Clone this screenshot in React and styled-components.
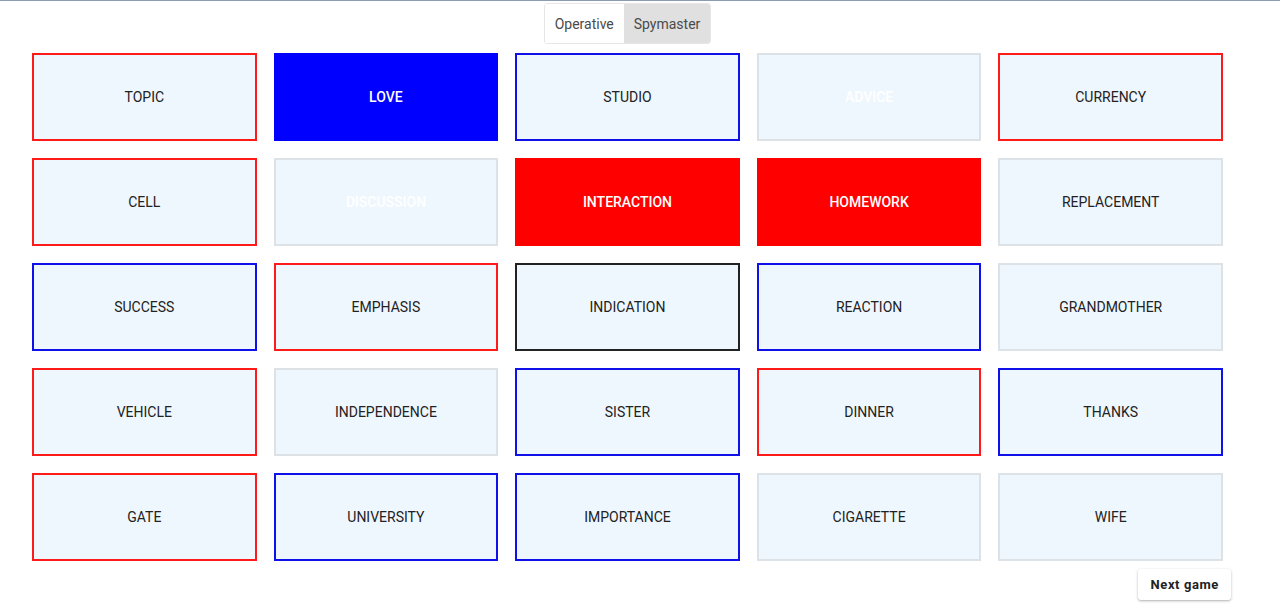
import React, { useState } from 'react';
import styled, { createGlobalStyle } from 'styled-components';

const GlobalStyle = createGlobalStyle`
  body {
    margin: 0;
    background: #fff;
    font-family: Roboto, "Liberation Sans", sans-serif;
  }
`;

const words = [
  ['TOPIC', 'red', false], ['LOVE', 'blue', true], ['STUDIO', 'blue', false], ['ADVICE', 'neutral', true], ['CURRENCY', 'red', false],
  ['CELL', 'red', false], ['DISCUSSION', 'neutral', true], ['INTERACTION', 'red', true], ['HOMEWORK', 'red', true], ['REPLACEMENT', 'neutral', false],
  ['SUCCESS', 'blue', false], ['EMPHASIS', 'red', false], ['INDICATION', 'assassin', false], ['REACTION', 'blue', false], ['GRANDMOTHER', 'neutral', false],
  ['VEHICLE', 'red', false], ['INDEPENDENCE', 'neutral', false], ['SISTER', 'blue', false], ['DINNER', 'red', false], ['THANKS', 'blue', false],
  ['GATE', 'red', false], ['UNIVERSITY', 'blue', false], ['IMPORTANCE', 'blue', false], ['CIGARETTE', 'neutral', false], ['WIFE', 'neutral', false],
];

const borders = {
  red: '#ff1a1a',
  blue: '#1010e8',
  assassin: '#222',
  neutral: '#dde2e7',
};

const fills = {
  red: '#ff0000',
  blue: '#0000ff',
  neutral: '#eff7fe',
  assassin: '#222',
};

export default function App() {
  const [mode, setMode] = useState('spymaster');
  return (
    <>
      <GlobalStyle />
      <Page>
        <Toolbar>
          <Toggle>
            <ToggleButton $active={mode === 'operative'} onClick={() => setMode('operative')}>Operative</ToggleButton>
            <ToggleButton $active={mode === 'spymaster'} onClick={() => setMode('spymaster')}>Spymaster</ToggleButton>
          </Toggle>
        </Toolbar>
        <Board>
          {words.map(([w, team, revealed]) => (
            <Card key={w} $team={team} $revealed={revealed}>{w}</Card>
          ))}
        </Board>
        <Footer>
          <NextButton>Next game</NextButton>
        </Footer>
      </Page>
    </>
  );
}

const Page = styled.div`
  border-top: 1px solid #8c9cb0;
  min-height: 605px;
`;

const Toolbar = styled.div`
  display: flex;
  justify-content: center;
  width: 1191px;
  margin-left: 32px;
  padding-top: 2px;
`;

const Toggle = styled.div`
  display: flex;
  height: 41px;
  border: 1px solid #e6e6e6;
  border-radius: 3px;
  overflow: hidden;
  box-sizing: border-box;
`;

const ToggleButton = styled.button`
  border: none;
  padding: 0 ${p => (p.$active ? 10 : 10)}px;
  font-family: Roboto, "Liberation Sans", sans-serif;
  font-size: 14px;
  color: #4a4a4a;
  background: ${p => (p.$active ? '#e0e0e0' : '#fff')};
  cursor: pointer;
`;

const Board = styled.div`
  display: grid;
  grid-template-columns: repeat(5, 1fr);
  grid-auto-rows: 88px;
  column-gap: 17px;
  row-gap: 17px;
  width: 1191px;
  margin: 9px 0 0 32px;
`;

const Card = styled.div`
  display: flex;
  align-items: center;
  justify-content: center;
  box-sizing: border-box;
  font-size: 14px;
  border: 2px solid ${p => (p.$revealed && p.$team !== 'neutral' ? fills[p.$team] : borders[p.$team])};
  background: ${p => (p.$revealed ? fills[p.$team] : '#eff7fe')};
  color: ${p => (p.$revealed ? '#fff' : '#222')};
  font-weight: ${p => (p.$revealed ? 500 : 400)};
`;

const Footer = styled.div`
  display: flex;
  justify-content: flex-end;
  padding: 8px 49px 0 0;
`;

const NextButton = styled.button`
  height: 31px;
  padding: 0 12px;
  border: none;
  border-radius: 3px;
  background: #fff;
  box-shadow: 0 1px 3px rgba(0, 0, 0, 0.25), 0 1px 1px rgba(0, 0, 0, 0.08);
  font-family: Roboto, "Liberation Sans", sans-serif;
  font-size: 13px;
  font-weight: 700;
  letter-spacing: 0.6px;
  color: #222;
  cursor: pointer;
`;
